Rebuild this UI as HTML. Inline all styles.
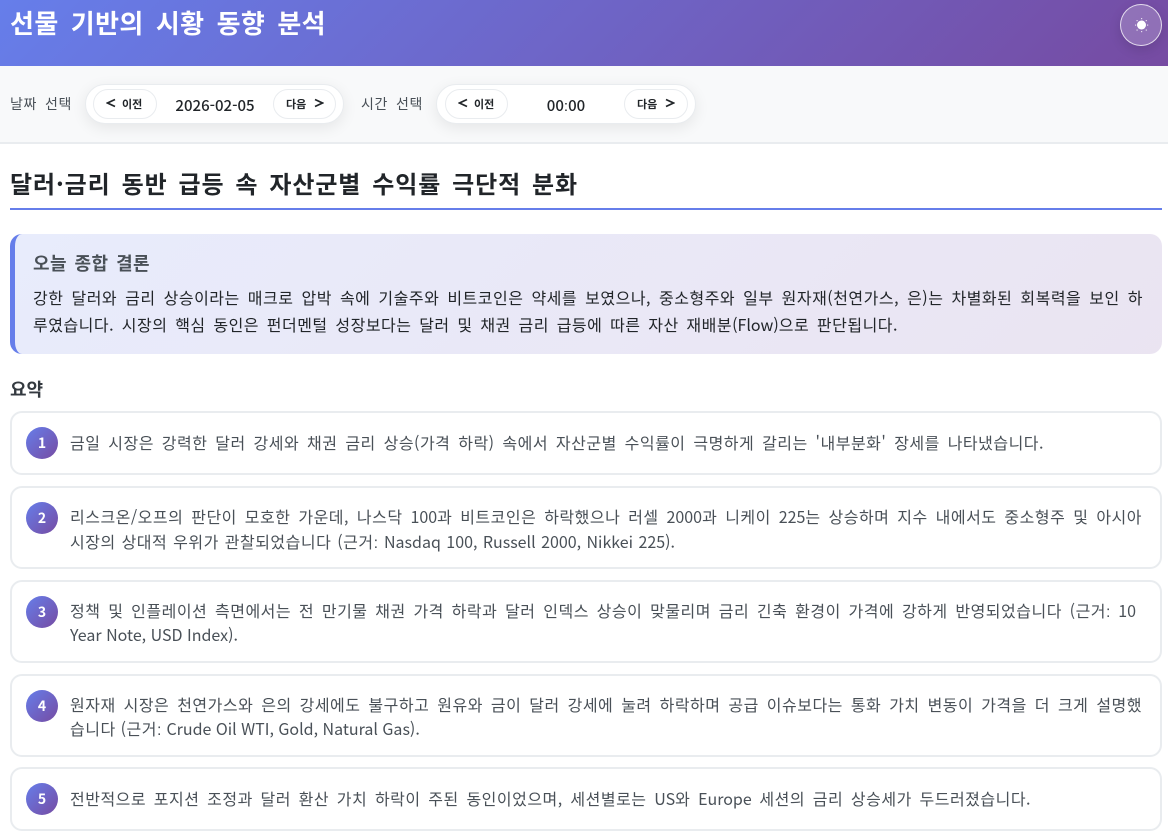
<!DOCTYPE html>
<html lang="ko"><head><meta charset="utf-8"><style>
*{box-sizing:border-box}
html,body{margin:0;padding:0;width:1168px;height:836px;overflow:hidden;background:#fff;font-family:"Noto Sans CJK KR","Liberation Sans",sans-serif;color:#212529}
.abs{position:absolute;white-space:nowrap}
.j{position:absolute;white-space:nowrap;text-align:justify;text-align-last:justify;text-justify:inter-word}
.hdr{position:absolute;left:0;top:0;width:1168px;height:66px;background:linear-gradient(135deg,#667eea 0%,#764ba2 100%)}
.tool{position:absolute;left:0;top:66px;width:1168px;height:78px;background:#f8f9fa;border-bottom:2px solid #e9ecef}
.pill{position:absolute;top:84px;height:40px;background:#fff;border:1px solid #e9ecef;border-radius:20px;box-shadow:0 4px 15px rgba(0,0,0,.08)}
.btn{position:absolute;top:89px;height:30px;background:#fff;border:1px solid #e9ecef;border-radius:15px;font-size:11px;font-weight:700}
.btn span{position:absolute;top:0;line-height:28px;white-space:nowrap}
.btn svg{position:absolute;top:8px;width:10px;height:10px}
.lab{font-size:14px;color:#495057;top:94px;line-height:20px;width:62px;letter-spacing:.6px}
.val{font-size:15px;font-weight:500;top:96px;line-height:20px;text-align:center;color:#212529}
.callout{position:absolute;left:10px;top:234px;width:1152px;height:120px;border-left:5px solid #667eea;border-radius:12px;background:linear-gradient(135deg,rgba(102,126,234,.15),rgba(118,75,162,.15))}
.item{position:absolute;left:10px;width:1152px;background:#fff;border:2px solid #e9ecef;border-radius:12px}
.num{position:absolute;left:26px;width:32px;height:32px;border-radius:50%;background:linear-gradient(135deg,#667eea,#764ba2);color:#fff;font-size:14px;font-weight:700;line-height:32px;text-align:center}
.t{font-size:16px;line-height:24px;height:24px;color:#495057;letter-spacing:.5px}
.c{font-size:16px;line-height:26px;height:26px;color:#212529;letter-spacing:.5px}
.e{font-size:16px;letter-spacing:0}
.k{font-family:"Liberation Sans",sans-serif;letter-spacing:0}
</style></head><body>
<div class="hdr"></div>
<div class="j" style="left:10px;top:4px;width:316px;font-size:26px;font-weight:700;color:#fff;line-height:38px;letter-spacing:.4px">선물 기반의 시황 동향 분석</div>
<div class="abs" style="left:1120px;top:4px;width:42px;height:42px;border-radius:50%;background:rgba(255,255,255,.2);border:1px solid rgba(255,255,255,.75);box-shadow:0 4px 12px rgba(0,0,0,.12)">
<svg width="40" height="40" viewBox="0 0 40 40" style="display:block"><circle cx="20.5" cy="20" r="4.5" fill="#fff"/><g fill="#fff" fill-opacity=".75"><rect x="20" y="13" width="1.2" height="1.2"/><rect x="20" y="26" width="1.2" height="1.2"/><rect x="14" y="19.5" width="1.2" height="1.2"/><rect x="26" y="19.5" width="1.2" height="1.2"/><rect x="15.5" y="24.5" width="1.2" height="1.2"/><rect x="24.7" y="24.5" width="1.2" height="1.2"/><rect x="15.5" y="15" width="1.2" height="1.2"/><rect x="24.7" y="15" width="1.2" height="1.2"/></g></svg></div>
<div class="tool"></div>
<div class="j lab" style="left:10px">날짜 선택</div>
<div class="pill" style="left:85px;width:259px"></div>
<div class="btn" style="left:93px;width:64px"><svg viewBox="0 0 10 10" style="left:12px"><path d="M9 1.5L1.5 5L9 8.5" fill="none" stroke="#212529" stroke-width="1.7"/></svg><span style="left:28px">이전</span></div>
<div class="abs val" style="left:157px;width:116px">2026-02-05</div>
<div class="btn" style="left:273px;width:63px"><span style="left:12px">다음</span><svg viewBox="0 0 10 10" style="left:40px"><path d="M1 1.5L8.5 5L1 8.5" fill="none" stroke="#212529" stroke-width="1.7"/></svg></div>
<div class="j lab" style="left:361px">시간 선택</div>
<div class="pill" style="left:436px;width:260px"></div>
<div class="btn" style="left:445px;width:63px"><svg viewBox="0 0 10 10" style="left:12px"><path d="M9 1.5L1.5 5L9 8.5" fill="none" stroke="#212529" stroke-width="1.7"/></svg><span style="left:28px">이전</span></div>
<div class="abs val" style="left:508px;width:116px">00<span class="k">:</span>00</div>
<div class="btn" style="left:624px;width:64px"><span style="left:12px">다음</span><svg viewBox="0 0 10 10" style="left:40px"><path d="M1 1.5L8.5 5L1 8.5" fill="none" stroke="#212529" stroke-width="1.7"/></svg></div>
<div class="j" style="left:10px;top:166px;width:568px;font-size:24px;font-weight:700;line-height:34px;letter-spacing:.9px">달러·금리 동반 급등 속 자산군별 수익률 극단적 분화</div>
<div class="abs" style="left:10px;top:208px;width:1152px;height:2px;background:#667eea"></div>
<div class="callout"></div>
<div class="j" style="left:33px;top:250px;width:117px;font-size:18px;font-weight:700;color:#495057;line-height:26px;letter-spacing:.4px">오늘 종합 결론</div>
<div class="j c" style="left:33px;top:284px;width:1110px">강한 달러와 금리 상승이라는 매크로 압박 속에 기술주와 비트코인은 약세를 보였으나, 중소형주와 일부 원자재(천연가스, 은)는 차별화된 회복력을 보인 하</div>
<div class="j c" style="left:33px;top:311px;width:865px">루였습니다. 시장의 핵심 동인은 펀더멘털 성장보다는 달러 및 채권 금리 급등에 따른 자산 재배분<span class="e">(Flow)</span>으로 판단됩니다.</div>
<div class="j" style="left:10px;top:376px;width:35px;font-size:18px;font-weight:700;color:#343a40;line-height:26px">요약</div>
<div class="item" style="top:411px;height:64px"></div><div class="num" style="top:427px">1</div>
<div class="j t" style="left:70px;top:430px;width:974px">금일 시장은 강력한 달러 강세와 채권 금리 상승(가격 하락) 속에서 자산군별 수익률이 극명하게 갈리는 '내부분화' 장세를 나타냈습니다.</div>
<div class="item" style="top:486px;height:83px"></div><div class="num" style="top:502px">2</div>
<div class="j t" style="left:70px;top:504px;width:1072px">리스크온/오프의 판단이 모호한 가운데, 나스닥 <span class="e">100</span>과 비트코인은 하락했으나 러셀 <span class="e">2000</span>과 니케이 <span class="e">225</span>는 상승하며 지수 내에서도 중소형주 및 아시아</div>
<div class="j t" style="left:70px;top:529px;width:605px">시장의 상대적 우위가 관찰되었습니다 (근거<span class="k">:</span> <span class="e">Nasdaq 100, Russell 2000, Nikkei 225).</span></div>
<div class="item" style="top:580px;height:83px"></div><div class="num" style="top:596px">3</div>
<div class="j t" style="left:70px;top:598px;width:1066px">정책 및 인플레이션 측면에서는 전 만기물 채권 가격 하락과 달러 인덱스 상승이 맞물리며 금리 긴축 환경이 가격에 강하게 반영되었습니다 (근거<span class="k">:</span> <span class="e">10</span></div>
<div class="j t" style="left:70px;top:622px;width:165px"><span class="e">Year Note, USD Index).</span></div>
<div class="item" style="top:674px;height:83px"></div><div class="num" style="top:690px">4</div>
<div class="j t" style="left:70px;top:692px;width:1072px">원자재 시장은 천연가스와 은의 강세에도 불구하고 원유와 금이 달러 강세에 눌려 하락하며 공급 이슈보다는 통화 가치 변동이 가격을 더 크게 설명했</div>
<div class="j t" style="left:70px;top:716px;width:349px">습니다 (근거<span class="k">:</span> <span class="e">Crude Oil WTI, Gold, Natural Gas).</span></div>
<div class="item" style="top:767px;height:64px"></div><div class="num" style="top:783px">5</div>
<div class="j t" style="left:70px;top:786px;width:961px">전반적으로 포지션 조정과 달러 환산 가치 하락이 주된 동인이었으며, 세션별로는 <span class="e">US</span>와 <span class="e">Europe</span> 세션의 금리 상승세가 두드러졌습니다.</div>
</body></html>
